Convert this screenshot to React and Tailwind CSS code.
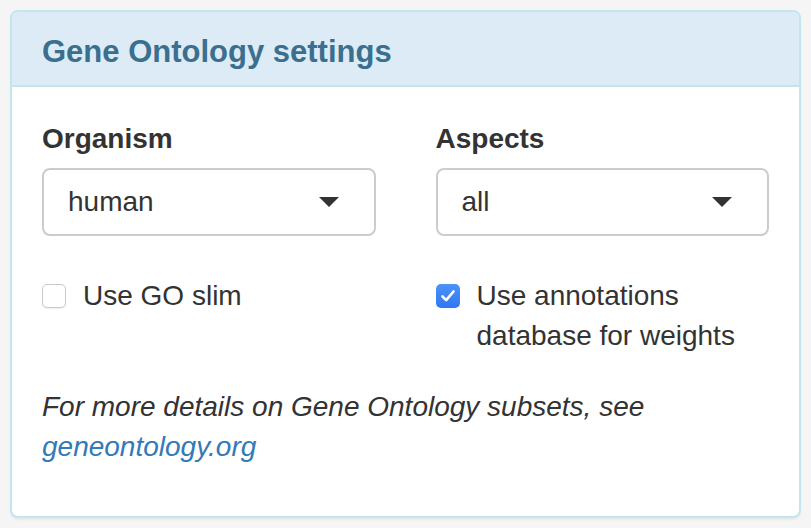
import React from "react";

const font = { fontFamily: '"Liberation Sans", Arial, Helvetica, sans-serif' };

function Caret() {
  return (
    <svg width="20" height="10" viewBox="0 0 20 10" className="shrink-0">
      <path d="M0 0 L20 0 L10 10 Z" fill="#333333" />
    </svg>
  );
}

function Select({ value }) {
  return (
    <div className="flex h-[68px] items-center justify-between rounded-[8px] border-2 border-[#cccccc] bg-white pl-[24px] pr-[35px]">
      <span className="text-[28px] leading-[40px] text-[#333333]">{value}</span>
      <Caret />
    </div>
  );
}

function Checkbox({ checked }) {
  if (checked) {
    return (
      <div className="mt-[8px] flex h-[24px] w-[24px] shrink-0 items-center justify-center rounded-[5px] bg-gradient-to-b from-[#4b93f8] to-[#2f77f2]">
        <svg width="16" height="14" viewBox="0 0 16 14">
          <path d="M2.5 7.5 L6.2 11.2 L13.5 2.5" fill="none" stroke="#ffffff" strokeWidth="2.6" strokeLinecap="round" strokeLinejoin="round" />
        </svg>
      </div>
    );
  }
  return (
    <div className="mt-[8px] h-[24px] w-[24px] shrink-0 rounded-[5px] border border-[#c9c9c9] bg-white shadow-[0_1px_1px_rgba(0,0,0,0.06)]" />
  );
}

export default function App() {
  return (
    <div className="h-[528px] w-[811px] bg-[#f5f5f5] p-[10px]" style={font}>
      <div className="overflow-hidden rounded-[8px] border-2 border-[#c3e5ee] bg-white shadow-[0_2px_2px_rgba(0,0,0,0.05)]">
        <div className="border-b-2 border-[#c3e5ee] bg-[#dcebf6] pb-[17px] pl-[30px] pt-[23px]">
          <h3 className="text-[31px] font-bold leading-[33px] text-[#3a6f8f]">Gene Ontology settings</h3>
        </div>
        <div className="px-[30px] pb-[49px] pt-[32px] text-[#333333]">
          <div className="grid grid-cols-2 gap-x-[60px]">
            <div>
              <div className="mb-[9px] text-[28px] font-bold leading-[40px]">Organism</div>
              <Select value="human" />
            </div>
            <div>
              <div className="mb-[9px] text-[28px] font-bold leading-[40px]">Aspects</div>
              <Select value="all" />
            </div>
            <div className="mt-[40px] flex items-start gap-[17px]">
              <Checkbox checked={false} />
              <span className="text-[28px] leading-[40px]">Use GO slim</span>
            </div>
            <div className="mt-[40px] flex items-start gap-[17px]">
              <Checkbox checked />
              <span className="text-[28px] leading-[40px]">
                Use annotations
                <br />
                database for weights
              </span>
            </div>
          </div>
          <p className="mt-[31px] text-[28px] italic leading-[40px]">
            For more details on Gene Ontology subsets, see
            <br />
            <a className="text-[#337ab7]" href="#">geneontology.org</a>
          </p>
        </div>
      </div>
    </div>
  );
}
